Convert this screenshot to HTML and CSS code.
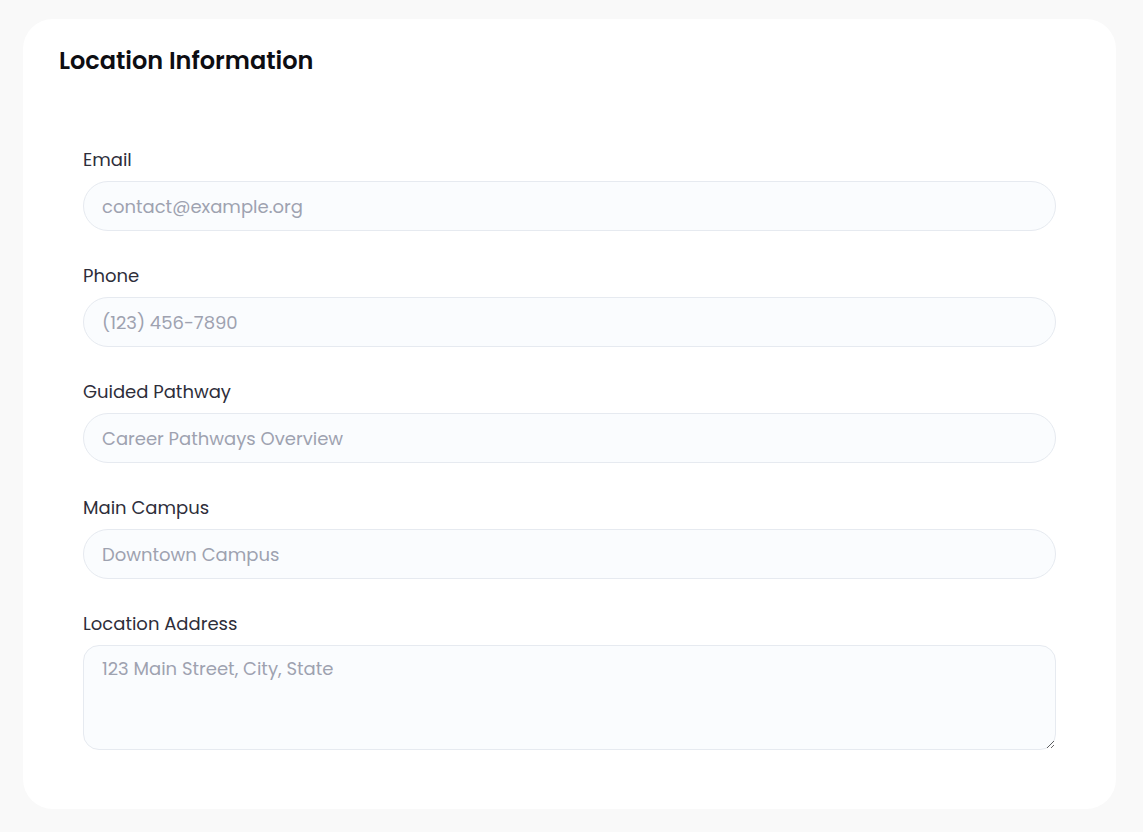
FILE: index.html
```html
<!DOCTYPE html>
<html lang="en">
<head>
    <meta charset="UTF-8">
    <meta name="viewport" content="width=device-width, initial-scale=1.0">
    <title>Location Information</title>
    <link rel="stylesheet" href="styles.css">
</head>
<body>
    <section class="card">
        <h2 class="card-title">Location Information</h2>
        <form class="location-form">
            <div class="field">
                <label for="email">Email</label>
                <input type="email" id="email" placeholder="contact@example.org">
            </div>
            <div class="field">
                <label for="phone">Phone</label>
                <input type="tel" id="phone" placeholder="(123) 456-7890">
            </div>
            <div class="field">
                <label for="pathway">Guided Pathway</label>
                <input type="text" id="pathway" placeholder="Career Pathways Overview">
            </div>
            <div class="field">
                <label for="campus">Main Campus</label>
                <input type="text" id="campus" placeholder="Downtown Campus">
            </div>
            <div class="field">
                <label for="address">Location Address</label>
                <textarea id="address" placeholder="123 Main Street, City, State"></textarea>
            </div>
        </form>
    </section>
</body>
</html>
```

FILE: styles.css
```css
body {
    margin: 0;
    padding: 19px 27px 23px 23px;
    background-color: #f9f9f9;
    font-family: Poppins, Inter, "Noto Sans", sans-serif;
    color: #2b2b36;
}
.card {
    background-color: #fff;
    border-radius: 30px;
    padding: 24px 36px 59px;
}
.card-title {
    margin: 0;
    font-size: 24px;
    line-height: 36px;
    font-weight: 600;
    color: #0d0d12;
}
.location-form {
    display: flex;
    flex-direction: column;
    gap: 33px;
    margin-top: 69px;
    padding: 0 24px;
}
.field {
    display: flex;
    flex-direction: column;
    gap: 9px;
}
.field label {
    font-size: 18px;
    line-height: 24px;
    color: #2e2e3a;
}
.field input,
.field textarea {
    box-sizing: border-box;
    width: 100%;
    font-family: inherit;
    font-size: 18px;
    color: #2e2e3a;
    background-color: #fafcfe;
    border: 1px solid #e6eaf0;
    outline: none;
}
.field input {
    height: 50px;
    padding: 0 18px;
    border-radius: 25px;
}
.field textarea {
    height: 105px;
    padding: 9px 18px;
    border-radius: 16px;
    line-height: 27px;
}
.field input::placeholder,
.field textarea::placeholder {
    color: #9ea2b0;
}
```
